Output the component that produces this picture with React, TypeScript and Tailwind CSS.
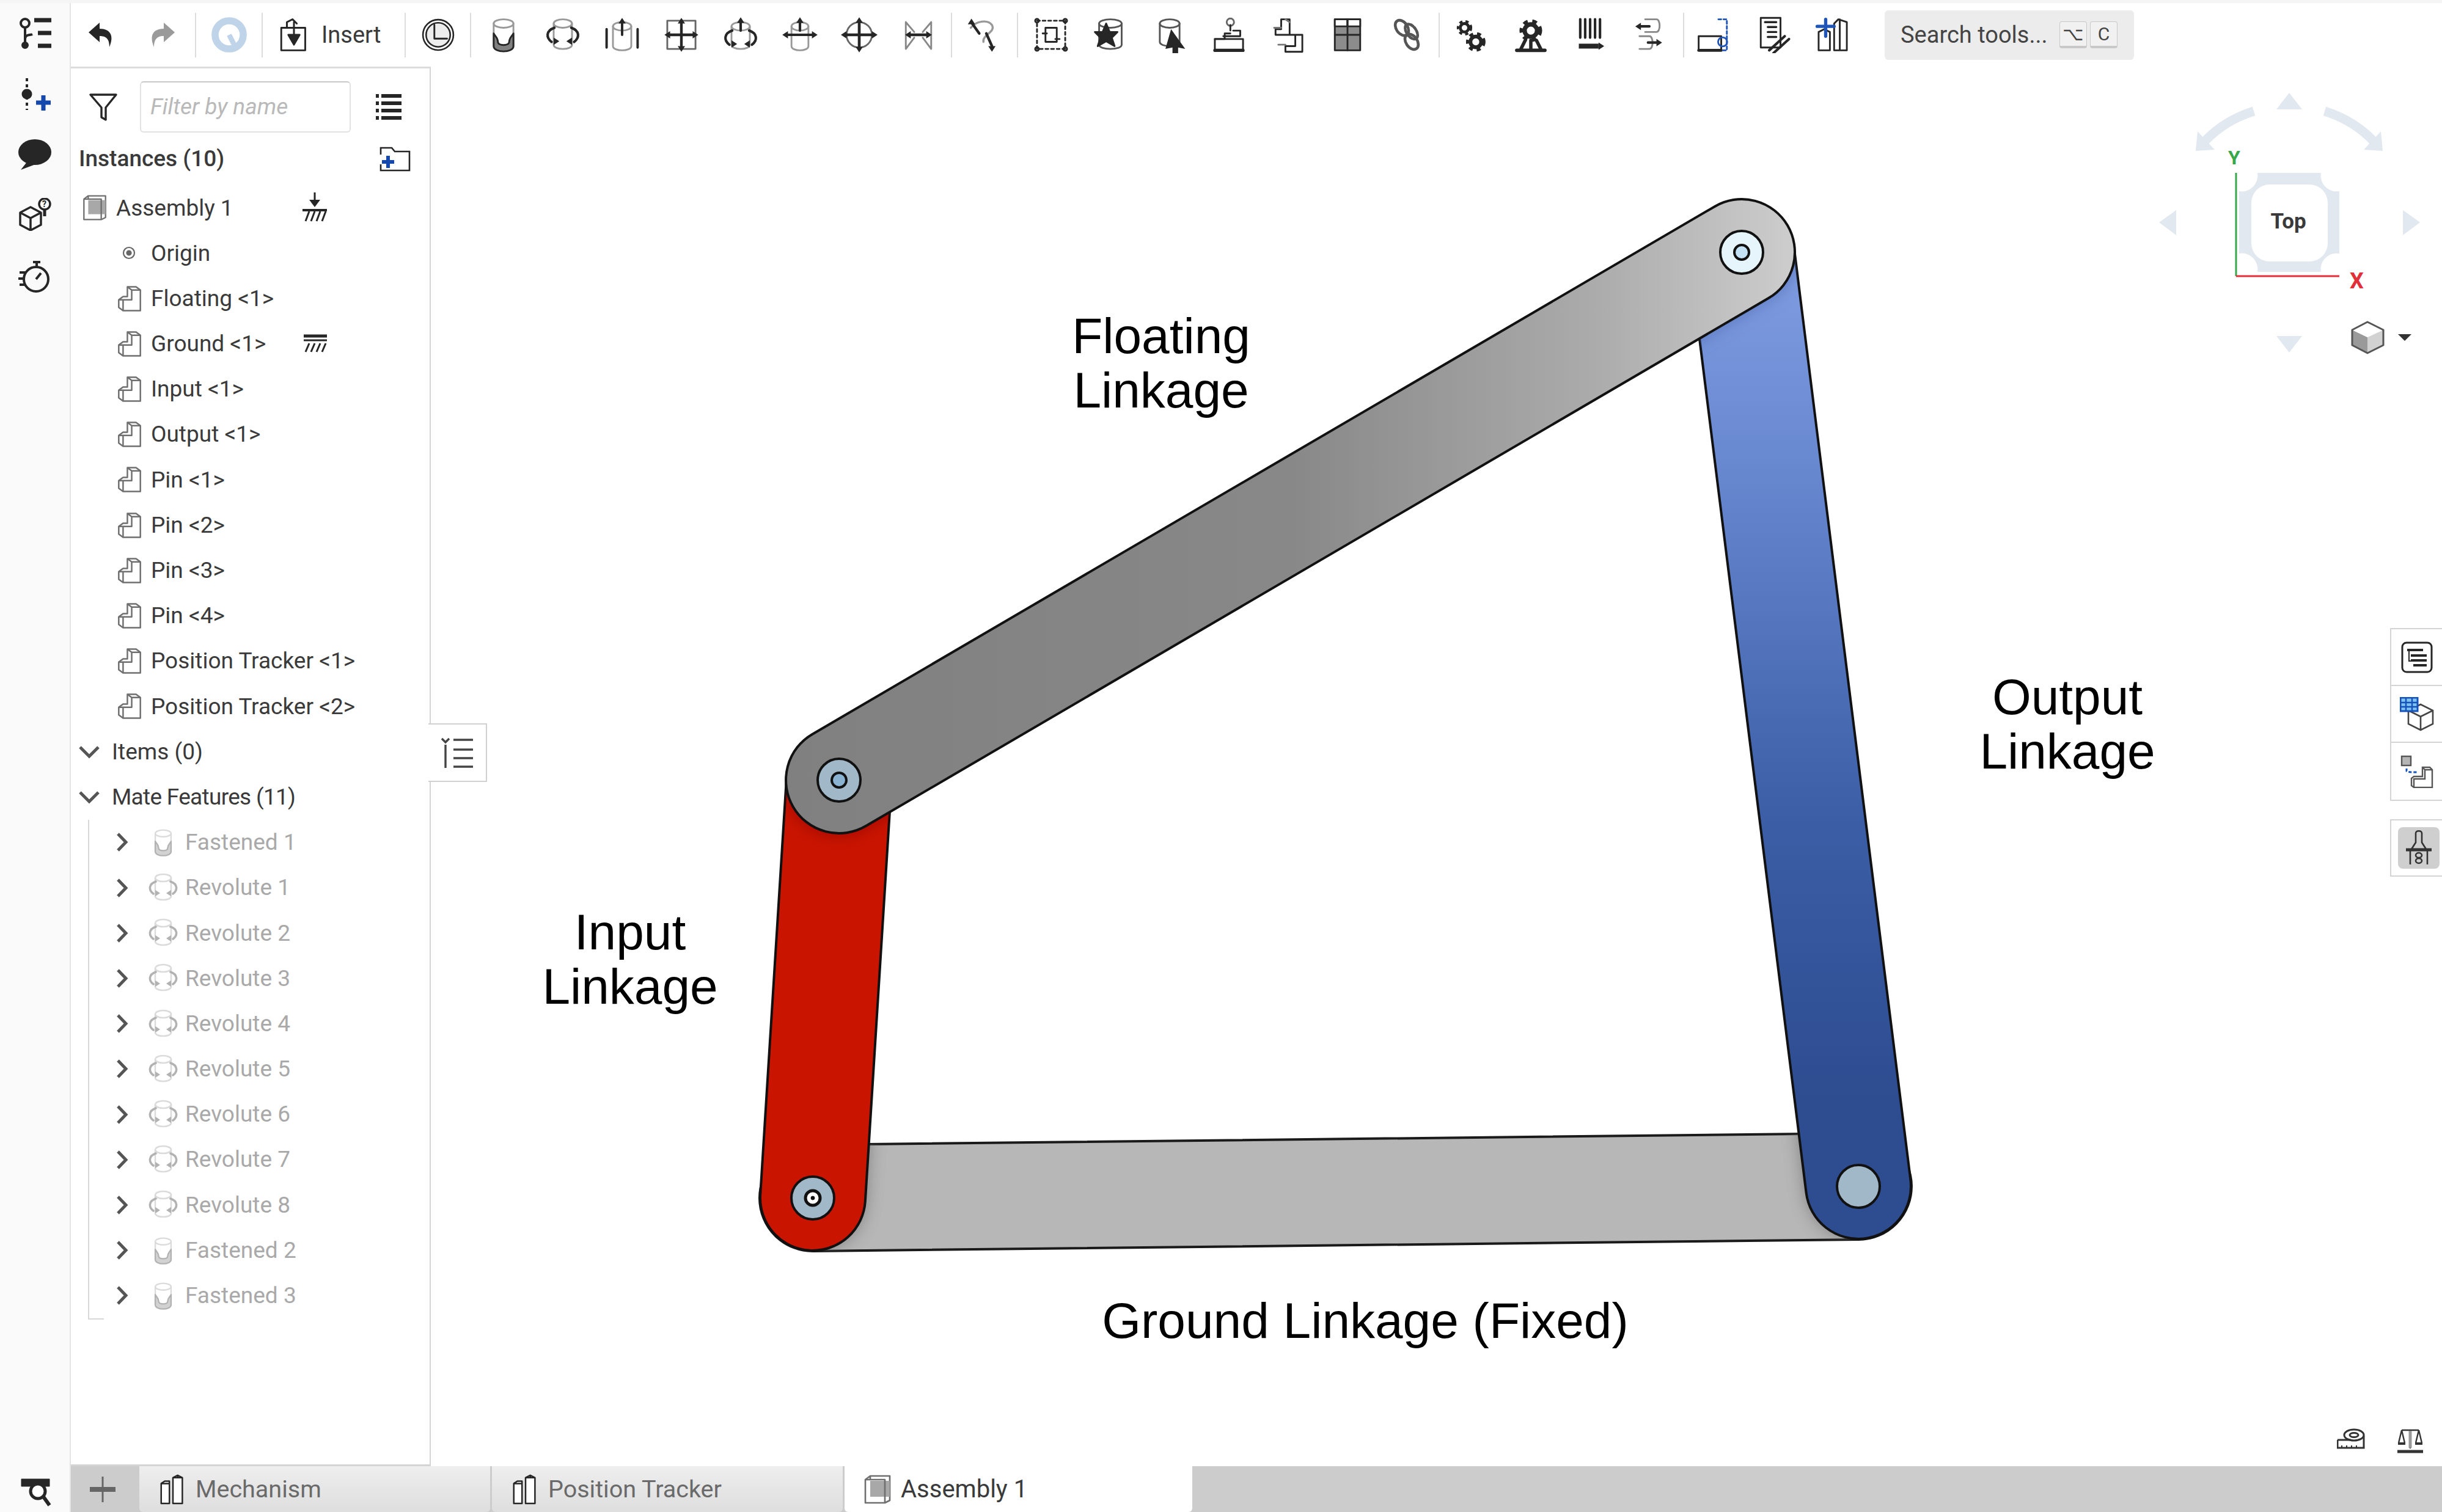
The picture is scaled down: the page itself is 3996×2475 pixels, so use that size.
import React from 'react';

const ink = '#262626';

const capsule = (x1: number, y1: number, x2: number, y2: number, r: number) => {
  const dx = x2 - x1;
  const dy = y2 - y1;
  const len = Math.hypot(dx, dy);
  const nx = (-dy / len) * r;
  const ny = (dx / len) * r;
  return `M${x1 + nx} ${y1 + ny}L${x2 + nx} ${y2 + ny}A${r} ${r} 0 0 0 ${x2 - nx} ${y2 - ny}L${x1 - nx} ${y1 - ny}A${r} ${r} 0 0 0 ${x1 + nx} ${y1 + ny}Z`;
};

const floatingPath = capsule(1371, 1277, 2848, 413, 87);
const inputPath = capsule(1328, 1961, 1371, 1277, 86);
const outputPath = capsule(3039, 1942, 2848, 413, 86);
const groundPath = capsule(1328, 1961, 3039, 1942, 87);

type IconProps = { size?: number; children: React.ReactNode; className?: string };

const Icon = ({ size = 60, children, className }: IconProps) => (
  <svg width={size} height={size} viewBox="0 0 26 26" fill="none" stroke={ink} strokeWidth="1.25" strokeLinejoin="round" strokeLinecap="round" className={className}>
    {children}
  </svg>
);

const Arrow = ({ x, y, dir }: { x: number; y: number; dir: 'u' | 'd' | 'l' | 'r' }) => {
  const pts = { u: [0, -3, -2.6, 1, 2.6, 1], d: [0, 3, -2.6, -1, 2.6, -1], l: [-3, 0, 1, -2.6, 1, 2.6], r: [3, 0, -1, -2.6, -1, 2.6] }[dir];
  return <polygon points={`${x + pts[0]},${y + pts[1]} ${x + pts[2]},${y + pts[3]} ${x + pts[4]},${y + pts[5]}`} fill={ink} stroke="none" />;
};

const Cyl = ({ x = 13, y = 5, w = 7, h = 16, c = '#999' }: { x?: number; y?: number; w?: number; h?: number; c?: string }) => (
  <g stroke={c}>
    <ellipse cx={x} cy={y} rx={w} ry={3} />
    <path d={`M${x - w} ${y}V${y + h}c0 4 ${w * 2} 4 ${w * 2} 0V${y}`} />
  </g>
);

const Gear = ({ x, y, r }: { x: number; y: number; r: number }) => (
  <g>
    <circle cx={x} cy={y} r={r} strokeWidth={r * 0.7} />
    <circle cx={x} cy={y} r={r + r * 0.55} strokeWidth={r * 0.55} strokeDasharray={`${r * 0.75} ${r * 0.75}`} strokeLinecap="butt" />
  </g>
);

const FastenedIcon = ({ size }: { size?: number }) => (
  <Icon size={size}>
    <Cyl />
    <path d="M6 12c1 2 3 3 3 6 0 3 8 3 8 0 0-3 2-4 3-6v9c0 5-14 5-14 0z" fill="#808080" stroke={ink} />
  </Icon>
);

const RevoluteIcon = ({ size }: { size?: number }) => (
  <Icon size={size}>
    <Cyl y={5} h={15} w={6.5} />
    <path d="M7 8c-6 2-6 7-2 10M19 8c6 2 6 7 2 10" strokeWidth="1.8" />
    <Arrow x={7.5} y={17.5} dir="r" />
    <Arrow x={18.5} y={17.5} dir="l" />
  </Icon>
);

const toolbarIcons: React.ReactNode[] = [
  <FastenedIcon key="fastened" />,
  <RevoluteIcon key="revolute" />,
  <Icon key="slider">
    <Cyl w={6.5} y={7} h={14} />
    <path d="M13 13V5M2 9v13M24 9v13" strokeWidth="1.7" />
    <Arrow x={13} y={4} dir="u" />
  </Icon>,
  <Icon key="planar">
    <rect x="3" y="3" width="20" height="20" stroke="#666" />
    <path d="M13 5v16M4 13h18" strokeWidth="1.9" />
    <Arrow x={13} y={4} dir="u" />
    <Arrow x={13} y={22} dir="d" />
    <Arrow x={4} y={13} dir="l" />
    <Arrow x={22} y={13} dir="r" />
  </Icon>,
  <Icon key="cylindrical">
    <Cyl w={6.5} y={7} h={13} />
    <path d="M13 10V4M7 10c-6 2-6 7-2 10M19 10c6 2 6 7 2 10" strokeWidth="1.8" />
    <Arrow x={13} y={3.5} dir="u" />
    <Arrow x={7.5} y={19.5} dir="r" />
    <Arrow x={18.5} y={19.5} dir="l" />
  </Icon>,
  <Icon key="pinslot">
    <Cyl w={6} y={7} h={14} />
    <path d="M13 10V4M4 13h18" strokeWidth="1.8" />
    <Arrow x={13} y={3.5} dir="u" />
    <Arrow x={22.5} y={13} dir="r" />
    <Arrow x={3.5} y={13} dir="l" />
  </Icon>,
  <Icon key="planar-ball">
    <circle cx="13" cy="13" r="9" stroke="#666" />
    <path d="M13 5v16M4 13h18" strokeWidth="2" />
    <Arrow x={13} y={3.5} dir="u" />
    <Arrow x={13} y={22.5} dir="d" />
    <Arrow x={3} y={13} dir="l" />
    <Arrow x={23} y={13} dir="r" />
  </Icon>,
  <Icon key="parallel">
    <path d="M4 4v19l6-8M22 4v19l-6-8M4 4l6 7M22 4l-6 7" stroke="#888" />
    <path d="M7 13h12" strokeWidth="2" />
    <Arrow x={6.5} y={13} dir="l" />
    <Arrow x={19.5} y={13} dir="r" />
  </Icon>,
  <Icon key="tangent">
    <path d="M5 8c4-5 12-6 15-2 3 5-7 7-6 12" stroke="#999" strokeWidth="1.5" />
    <path d="M6 5l5 7M16 12l4 9" strokeWidth="1.9" />
    <Arrow x={5.5} y={4.5} dir="u" />
    <Arrow x={20} y={22} dir="d" />
  </Icon>,
  <Icon key="group">
    <rect x="3" y="3" width="20" height="20" strokeDasharray="2 2" />
    <rect x="9" y="8" width="8" height="10" />
    <path d="M7 12h3M16 16h3" />
    <circle cx="3" cy="3" r="1.3" />
    <circle cx="23" cy="3" r="1.3" />
    <circle cx="3" cy="23" r="1.3" />
    <circle cx="23" cy="23" r="1.3" />
  </Icon>,
  <Icon key="replicate">
    <Cyl w={8} y={5} h={15} c="#555" />
    <polygon points="10,5 12.5,11 18,11 14,15 16,21 10,17.5 4,21 6,15 2,11 7.5,11" fill={ink} />
  </Icon>,
  <Icon key="connector">
    <Cyl w={7} y={5} h={13} c="#555" />
    <polygon points="14,9 24,23 19,22 19,26 15,26 15,22 10,23" fill={ink} stroke="none" />
  </Icon>,
  <Icon key="subassembly">
    <circle cx="14" cy="4" r="2.6" stroke="#666" />
    <path d="M14 6v4M9 14h12v-4h-5M3 16h7v-4h4" />
    <rect x="3" y="16" width="20" height="8" />
    <path d="M3 24h20" strokeWidth="2.2" />
  </Icon>,
  <Icon key="explode">
    <path d="M8 2h6v11H4v-4h4zM12 13h11v12H11v-4h7v-8" />
    <path d="M3 8h5M6 20h5M11 2l3 2" stroke="#777" />
  </Icon>,
  <Icon key="section">
    <rect x="4" y="2" width="18" height="22" fill="#8c8c8c" />
    <rect x="4" y="2" width="9" height="5" fill="#fff" />
    <rect x="13" y="2" width="9" height="5" fill="#fff" />
    <path d="M4 13h18M13 2v22" />
  </Icon>,
  <Icon key="chain">
    <g transform="rotate(55 13 13)" stroke="#555" strokeWidth="2">
      <ellipse cx="7" cy="13" rx="6" ry="4" />
      <ellipse cx="19" cy="13" rx="6" ry="4" />
      <ellipse cx="13" cy="9" rx="6" ry="3.4" strokeDasharray="2 1" />
    </g>
  </Icon>,
  <Icon key="gears">
    <Gear x={8} y={8} r={3} />
    <Gear x={16} y={18} r={3.8} />
  </Icon>,
  <Icon key="rack">
    <Gear x={13} y={10} r={4.4} />
    <path d="M6 23l3-6M20 23l-3-6M13 17v6M3 24h20" strokeWidth="2.4" />
  </Icon>,
  <Icon key="linear">
    <path d="M6 2v13M9.5 2v13M13 2v13M16.5 2v13M20 2v13" strokeWidth="1.8" />
    <path d="M5 21h14" strokeWidth="3.5" strokeLinecap="butt" />
    <Arrow x={20} y={21} dir="r" />
  </Icon>,
  <Icon key="relation">
    <path d="M10 2h8c3 0 3 9 0 9h-8" stroke="#888" />
    <path d="M6 14h7c3 0 3 9 0 9H6" stroke="#888" />
    <path d="M7 7h6M12 18.5h6" strokeWidth="1.8" />
    <Arrow x={6} y={7} dir="l" />
    <Arrow x={19} y={18.5} dir="r" />
  </Icon>,
  <Icon key="bom">
    <rect x="2" y="14" width="16" height="10" />
    <path d="M2 24h16" strokeWidth="2" />
    <path d="M16 2h6v22h-4" stroke="#1f55b8" strokeDasharray="2 1.6" />
    <circle cx="19" cy="18" r="3.2" stroke="#1f55b8" />
  </Icon>,
  <Icon key="doc">
    <path d="M4 1h14v21H4z" />
    <path d="M7 4h8M9 7.5h6M9 11h6M9 14.5h6" strokeWidth="1.5" />
    <path d="M10 24l11-10M13 26l11-10" strokeWidth="1.8" />
  </Icon>,
  <Icon key="newpart">
    <path d="M14 5l3-3 6 2v20h-9zM3 11l4-2 4 2v13H3zM18 2v22" />
    <path d="M8 2v12M2 7h12" stroke="#1f55b8" strokeWidth="2.3" />
  </Icon>,
];

const PartIcon = () => (
  <svg width="46" height="46" viewBox="0 0 26 26" fill="none" stroke="#6f6f6f" strokeWidth="1.4" strokeLinejoin="round">
    <path d="M11 2h8l4 3v19H7l-4-3v-7l4-3h4z" />
    <path d="M11 2l4 3v9H7M15 5h8M7 14v10M3 14l4 0" />
  </svg>
);

const AssemblyIcon = ({ size = 46 }: { size?: number }) => (
  <svg width={size} height={size} viewBox="0 0 26 26" fill="none" stroke="#6f6f6f" strokeWidth="1.3" strokeLinejoin="round">
    <path d="M3 5l4-3h16v20l-4 2H3z" />
    <path d="M7 6h16v13H7z" fill="#a8a8a8" stroke="none" />
    <path d="M3 5h16v19M7 2l0 3" />
  </svg>
);

const DoubleBlock = () => (
  <svg width="50" height="54" viewBox="0 0 26 28" fill="none" stroke={ink} strokeWidth="1.3" strokeLinejoin="round">
    <path d="M3 9l3-2h4v19H3zM13 4l4-2 4 2v22h-8z" fill="#fff" />
    <path d="M13 4h8M3 9h7M17 2v2" />
  </svg>
);

const Chevron = ({ down }: { down?: boolean }) =>
  down ? (
    <svg width="36" height="22" viewBox="0 0 36 22" fill="none" stroke="#555" strokeWidth="5">
      <path d="M3 3l15 15L33 3" />
    </svg>
  ) : (
    <svg width="20" height="33" viewBox="0 0 20 33" fill="none" stroke="#555" strokeWidth="5">
      <path d="M3 3l13 13.5L3 30" />
    </svg>
  );

const GroundHatch = () => (
  <svg width="42" height="50" viewBox="0 0 42 50" fill="none" stroke={ink} strokeWidth="3">
    <path d="M21 0v18" />
    <polygon points="12,12 30,12 21,24" fill={ink} stroke="none" />
    <path d="M1 29h40" strokeWidth="4" />
    <path d="M6 47l6-16M15 47l6-16M24 47l6-16M33 47l6-16" />
  </svg>
);

const Row = ({ className, children }: { className?: string; children: React.ReactNode }) => (
  <div className={`flex items-center h-[74.2px] text-[37px] text-[#3a3a3a] whitespace-nowrap ${className ?? ''}`}>{children}</div>
);

const parts = ['Floating <1>', 'Ground <1>', 'Input <1>', 'Output <1>', 'Pin <1>', 'Pin <2>', 'Pin <3>', 'Pin <4>', 'Position Tracker <1>', 'Position Tracker <2>'];
const mates = ['Fastened 1', 'Revolute 1', 'Revolute 2', 'Revolute 3', 'Revolute 4', 'Revolute 5', 'Revolute 6', 'Revolute 7', 'Revolute 8', 'Fastened 2', 'Fastened 3'];

const Sep = ({ className }: { className: string }) => <div className={`w-[2px] h-[73px] bg-[#dcdcdc] shrink-0 ${className}`} />;

const ToolButton = ({ children, className }: { children: React.ReactNode; className?: string }) => (
  <div className={`w-[97px] h-[73px] shrink-0 flex items-center justify-center ${className ?? ''}`}>{children}</div>
);

const Toolbar = () => (
  <div className="h-[104px] pl-[2px] flex items-center shrink-0 bg-white">
    <ToolButton>
      <svg width="52" height="52" viewBox="0 0 26 26" fill={ink}>
        <path d="M11 3L2 11l9 8v-5c5 0 8 2 8 9 4-9 1-15-8-15z" />
      </svg>
    </ToolButton>
    <ToolButton>
      <svg width="52" height="52" viewBox="0 0 26 26" fill="#9a9a9a">
        <path d="M15 3l9 8-9 8v-5c-5 0-8 2-8 9-4-9-1-15 8-15z" />
      </svg>
    </ToolButton>
    <Sep className="ml-[7px] mr-[5px]" />
    <ToolButton>
      <svg width="60" height="60" viewBox="0 0 26 26" fill="none" stroke="#bfd4e8">
        <circle cx="13" cy="13" r="10" strokeWidth="5" />
        <path d="M13 13l5 10" strokeWidth="3.6" />
      </svg>
    </ToolButton>
    <Sep className="ml-[5px]" />
    <div className="flex items-center pl-[21px] gap-[15px] w-[232px] shrink-0">
      <Icon>
        <path d="M4 8h17v16H4z" />
        <path d="M8 8V4l4-2 3 3M13 4v13" strokeWidth="1.3" />
        <polygon points="9,13 17,13 13,20" fill={ink} />
      </Icon>
      <span className="text-[38px] text-[#3a3a3a]">Insert</span>
    </div>
    <Sep className="" />
    <ToolButton className="ml-[4px]">
      <Icon size={54}>
        <circle cx="13" cy="13" r="12" />
        <circle cx="13" cy="13" r="9.5" fill="#ededed" />
        <path d="M10 5v11h10" strokeWidth="1.4" />
      </Icon>
    </ToolButton>
    <Sep className="ml-[4px] mr-[4px]" />
    {toolbarIcons.slice(0, 8).map((icon, i) => (
      <ToolButton key={i}>{icon}</ToolButton>
    ))}
    <Sep className="ml-[5px]" />
    <ToolButton>{toolbarIcons[8]}</ToolButton>
    <Sep className="ml-[9px] mr-[5px]" />
    {toolbarIcons.slice(9, 16).map((icon, i) => (
      <ToolButton key={i}>{icon}</ToolButton>
    ))}
    <Sep className="ml-[4px] mr-[3px]" />
    {toolbarIcons.slice(16, 20).map((icon, i) => (
      <ToolButton key={i}>{icon}</ToolButton>
    ))}
    <Sep className="ml-[7px]" />
    {toolbarIcons.slice(20, 23).map((icon, i) => (
      <ToolButton key={i}>{icon}</ToolButton>
    ))}
    <div className="ml-[37px] w-[408px] h-[81px] rounded-[6px] bg-[#ececec] flex items-center pl-[26px] gap-[10px] shrink-0">
      <span className="text-[38px] text-[#444] whitespace-nowrap w-[250px]">Search tools...</span>
      <kbd className="w-[45px] h-[44px] rounded-[4px] bg-[#f1f1f1] border border-[#c9c9c9] border-b-[4px] text-[30px] text-[#444] flex items-center justify-center font-['Roboto',sans-serif]">⌥</kbd>
      <kbd className="w-[45px] h-[44px] -ml-[5px] rounded-[4px] bg-[#f1f1f1] border border-[#c9c9c9] border-b-[4px] text-[30px] text-[#444] flex items-center justify-center font-['Roboto',sans-serif]">C</kbd>
    </div>
  </div>
);

const Rail = () => (
  <div className="w-[116px] h-full shrink-0 flex flex-col items-center bg-[#fafafa] border-r-2 border-[#e4e4e4]">
    <div className="h-[100px] flex items-center">
      <svg width="58" height="54" viewBox="0 0 58 54" fill="none" stroke={ink} strokeWidth="4">
        <circle cx="13" cy="10" r="7" />
        <path d="M13 17v28M13 36c0-8 8-6 12-8" />
        <circle cx="13" cy="46" r="4" fill={ink} />
        <path d="M28 5h28M34 26h22M34 47h22" strokeWidth="7" />
      </svg>
    </div>
    <div className="h-[100px] flex items-center">
      <svg width="54" height="54" viewBox="0 0 54 54" fill="none">
        <path d="M14 0v52" stroke={ink} strokeWidth="4" strokeDasharray="5 5" />
        <circle cx="14" cy="26" r="8.5" fill={ink} />
        <path d="M41 28v25M29 40h24" stroke="#1448ad" strokeWidth="7" />
      </svg>
    </div>
    <div className="h-[96px] flex items-center">
      <svg width="56" height="50" viewBox="0 0 56 50" fill={ink}>
        <ellipse cx="28" cy="21" rx="27" ry="21" />
        <path d="M16 36L5 50l24-9z" />
      </svg>
    </div>
    <div className="h-[100px] flex items-center">
      <svg width="56" height="54" viewBox="0 0 56 54" fill="none" stroke={ink} strokeWidth="3.5" strokeLinejoin="round">
        <path d="M4 24l17-9 17 9v20l-17 9-17-9zM4 24l17 9 17-9M21 33v20" />
        <path d="M44 30V16" strokeWidth="5" />
        <circle cx="44" cy="10" r="9" fill="#fff" />
        <text x="40" y="15" fontSize="14" fontWeight="700" fill={ink} stroke="none" fontFamily="Roboto">?</text>
      </svg>
    </div>
    <div className="h-[104px] flex items-center">
      <svg width="54" height="54" viewBox="0 0 54 54" fill="none" stroke={ink} strokeWidth="4">
        <circle cx="29" cy="31" r="20" />
        <path d="M24 3h12M30 3v8M29 31l8-10M2 20h10M0 30h8M2 40h8" />
      </svg>
    </div>
    <div className="mt-auto mb-[8px] ml-[6px]">
      <svg width="54" height="50" viewBox="0 0 54 50" fill="none" stroke={ink}>
        <path d="M2 4h46v12H2z" fill={ink} />
        <circle cx="29" cy="24" r="12" strokeWidth="5" fill="#fff" />
        <path d="M38 33l10 14" strokeWidth="6" />
      </svg>
    </div>
  </div>
);

const Panel = () => (
  <div className="relative z-10 w-[589px] h-full shrink-0 bg-white border-t-[3px] border-r-2 border-b-[3px] border-[#d4d4d4] border-t-[#dcdcdc]">
    <div className="h-[111px] flex items-center pl-[30px] pt-[15px]">
      <svg width="46" height="46" viewBox="0 0 46 46" fill="none" stroke={ink} strokeWidth="3.4" strokeLinejoin="round" className="shrink-0">
        <path d="M2 3h42L27 24v20l-7-4V24z" />
      </svg>
      <div className="ml-[37px] w-[345px] h-[84px] rounded-[6px] border-2 border-[#e2e2e2] border-t-[#c8c8c8] flex items-center pl-[15px] italic text-[37px] text-[#b9b9b9] shrink-0">Filter by name</div>
      <svg width="42" height="42" viewBox="0 0 42 42" fill={ink} className="ml-[41px] shrink-0">
        <path d="M0 0h5v6H0zM9 0h33v6H9zM0 12h5v6H0zM9 12h33v6H9zM0 24h5v6H0zM9 24h33v6H9zM0 36h5v6H0zM9 36h33v6H9z" />
      </svg>
    </div>
    <Row className="pl-[13px] font-medium">
      <span className="w-[491px]">Instances (10)</span>
      <svg width="52" height="42" viewBox="0 0 52 42" fill="none" stroke={ink} strokeWidth="2.6">
        <path d="M3 14V3h18l5 6h24v31H3V30" />
        <path d="M15 16v20M5 26h20" stroke="#1448ad" strokeWidth="6" />
      </svg>
    </Row>
    <Row className="pl-[16px] mt-[6px]">
      <AssemblyIcon />
      <span className="ml-[12px] w-[304px]">Assembly 1</span>
      <GroundHatch />
    </Row>
    <Row className="pl-[74px]">
      <span className="w-[42px] flex justify-center">
        <svg width="22" height="22" viewBox="0 0 22 22" fill="none" stroke="#666" strokeWidth="2.2">
          <circle cx="11" cy="11" r="9" />
          <circle cx="11" cy="11" r="3.5" fill="#666" />
        </svg>
      </span>
      <span className="ml-[15px]">Origin</span>
    </Row>
    {parts.map((name) => (
      <Row key={name} className="pl-[73px]">
        <PartIcon />
        <span className="ml-[12px] w-[246px]">{name}</span>
        {name === 'Ground <1>' && (
          <svg width="38" height="32" viewBox="0 0 38 32" fill="none" stroke={ink} strokeWidth="3" className="ml-[4px]">
            <path d="M0 3h38" strokeWidth="5" />
            <path d="M0 10h38" strokeWidth="3" />
            <path d="M3 29l6-14M12 29l6-14M21 29l6-14M30 29l6-14" />
          </svg>
        )}
      </Row>
    ))}
    <Row className="pl-[12px]">
      <Chevron down />
      <span className="ml-[19px]">Items (0)</span>
    </Row>
    <Row className="pl-[12px]">
      <Chevron down />
      <span className="ml-[19px] tracking-[-0.7px]">Mate Features (11)</span>
    </Row>
    <div className="relative ml-[28px] border-l-2 border-[#d8d8d8]">
      {mates.map((name) => (
        <Row key={name} className="pl-[44px] text-[#a9a9a9]">
          <Chevron />
          <span className="ml-[31px] w-[52px] flex justify-center opacity-35">{name.startsWith('Fastened') ? <FastenedIcon size={48} /> : <RevoluteIcon size={52} />}</span>
          <span className="ml-[10px]">{name}</span>
        </Row>
      ))}
      <div className="w-[24px] h-[2px] bg-[#d8d8d8]" />
    </div>
    <div className="absolute top-[1072px] right-[-94px] w-[96px] h-[96px] bg-white border-2 border-l-0 border-[#d0d0d0] flex items-center justify-center">
      <svg width="52" height="50" viewBox="0 0 52 50" fill="none" stroke="#444" strokeWidth="3.4">
        <path d="M1 2l6 6 6-6M7 12v38M20 4h32M20 20h32M20 34h32M20 48h32" />
      </svg>
    </div>
  </div>
);

const ViewCube = () => (
  <g>
    <g fill="#e1e8ef">
      <polygon points="3744,152 3723,179 3765,179" />
      <polygon points="3744,577 3723,550 3765,550" />
      <polygon points="3531,364 3559,344 3559,385" />
      <polygon points="3958,364 3930,344 3930,385" />
      <polygon points="3591,247 3594,215 3622,245" />
      <polygon points="3897,247 3894,215 3866,245" />
    </g>
    <path d="M3686 182C3654 192 3628 208 3606 231M3802 182C3834 192 3860 208 3882 231" fill="none" stroke="#e1e8ef" strokeWidth="15" />
    <path fillRule="evenodd" fill="#e1e8ef" d="M3692 283H3796A26 26 0 0 0 3826 313V415A26 26 0 0 0 3796 445H3692A26 26 0 0 0 3662 415V313A26 26 0 0 0 3692 283ZM3712 302A30 30 0 0 0 3682 332V398A30 30 0 0 0 3712 428H3777A30 30 0 0 0 3807 398V332A30 30 0 0 0 3777 302Z" />
    <path d="M3657 283V452" stroke="#36a84a" strokeWidth="3" />
    <path d="M3657 452H3826" stroke="#e0303a" strokeWidth="3" />
    <path d="M3847 540L3872 552V578L3847 565Z" fill="#9a9a9a" />
    <path d="M3898 540L3872 552V578L3898 565Z" fill="#d2d2d2" />
    <path d="M3847 540L3872 527 3898 540 3872 552Z" fill="#fff" />
    <path d="M3847 540L3872 527 3898 540V565L3872 578 3847 565Z" fill="none" stroke="#555" strokeWidth="3" strokeLinejoin="round" />
    <polygon points="3922,547 3944,547 3933,558" fill="#333" />
  </g>
);

const labelText = "absolute text-center text-[82px] leading-[89px] text-black font-['Liberation_Sans',Arial,sans-serif]";

const Viewport = () => (
  <div className="relative flex-1 h-full overflow-hidden bg-white">
    <svg className="absolute inset-0" width="3293" height="2291" viewBox="703 109 3293 2291">
      <defs>
        <linearGradient id="floating" gradientUnits="userSpaceOnUse" x1="1285" y1="0" x2="2936" y2="0">
          <stop offset="0" stopColor="#808080" />
          <stop offset="0.5" stopColor="#888888" />
          <stop offset="0.8" stopColor="#ababab" />
          <stop offset="1" stopColor="#cdcdcd" />
        </linearGradient>
        <linearGradient id="output" gradientUnits="userSpaceOnUse" x1="0" y1="480" x2="0" y2="1800">
          <stop offset="0" stopColor="#7c99de" />
          <stop offset="0.3" stopColor="#5f80c9" />
          <stop offset="0.65" stopColor="#3b5ea6" />
          <stop offset="1" stopColor="#2e4c90" />
        </linearGradient>
        <clipPath id="clip-ground">
          <path d={groundPath} />
        </clipPath>
        <clipPath id="clip-input">
          <path d={inputPath} />
        </clipPath>
        <clipPath id="clip-output">
          <path d={outputPath} />
        </clipPath>
        <filter id="soft" x="-20%" y="-20%" width="140%" height="140%">
          <feGaussianBlur stdDeviation="14" />
        </filter>
      </defs>

      <path d={groundPath} fill="#b7b7b7" stroke="#1a1a1a" strokeWidth="4" />
      <g clipPath="url(#clip-ground)">
        <path d={inputPath} fill="#6e6e6e" filter="url(#soft)" opacity="0.8" />
        <path d={outputPath} fill="#6e6e6e" filter="url(#soft)" opacity="0.8" />
      </g>
      <path d={inputPath} fill="#c91500" stroke="#111" strokeWidth="4" />
      <g clipPath="url(#clip-input)">
        <path d={floatingPath} fill="#8c0c00" filter="url(#soft)" opacity="0.8" />
      </g>
      <path d={outputPath} fill="url(#output)" stroke="#111" strokeWidth="4" />
      <g clipPath="url(#clip-output)">
        <path d={floatingPath} fill="#4a65a8" filter="url(#soft)" opacity="0.7" />
      </g>
      <path d={floatingPath} fill="url(#floating)" stroke="#111" strokeWidth="4" />

      <g stroke="#111" strokeWidth="4">
        <circle cx="1371" cy="1277" r="35" fill="#a1b8c8" />
        <circle cx="1371" cy="1277" r="12" fill="#8ab3d2" />
        <circle cx="2848" cy="413" r="35" fill="#e6f5fc" />
        <circle cx="2848" cy="413" r="12" fill="#c3e2f6" />
        <circle cx="1328" cy="1961" r="35" fill="#a1b8c8" />
        <circle cx="1328" cy="1961" r="12" fill="#fff" strokeWidth="5" />
        <circle cx="1328" cy="1961" r="3" fill="#111" strokeWidth="1" />
        <circle cx="3039" cy="1942" r="35" fill="#a1b8c8" />
      </g>
      <ViewCube />
    </svg>

    <div className={`${labelText} left-[995px] top-[396px] w-[400px]`}>Floating<br />Linkage</div>
    <div className={`${labelText} left-[126px] top-[1372px] w-[400px]`}>Input<br />Linkage</div>
    <div className={`${labelText} left-[2478px] top-[987px] w-[400px]`}>Output<br />Linkage</div>
    <div className={`${labelText} left-[1029px] top-[2008px] w-[1000px]`}>Ground Linkage (Fixed)</div>

    <div className="absolute left-[2962px] top-[228px] font-bold text-[35px] text-[#3a3a3a] w-[155px] text-center">Top</div>
    <div className="absolute left-[2941px] top-[125px] font-bold text-[32px] text-[#36a84a]">Y</div>
    <div className="absolute left-[3140px] top-[324px] font-bold text-[36px] text-[#e0303a]">X</div>

    <div className="absolute right-0 top-[919px] w-[85px] bg-white border-2 border-r-0 border-[#d4d4d4] flex flex-col">
      <div className="h-[93px] flex items-center justify-center border-b-2 border-[#d4d4d4]">
        <svg width="52" height="52" viewBox="0 0 52 52" fill="none" stroke={ink} strokeWidth="3">
          <rect x="2" y="2" width="48" height="48" rx="7" />
          <path d="M10 14h26M16 23h26M16 31h26M20 39h22" strokeWidth="4" />
          <path d="M13 14v18h4" strokeWidth="2" />
        </svg>
      </div>
      <div className="h-[93px] flex items-center justify-center border-b-2 border-[#d4d4d4]">
        <svg width="56" height="56" viewBox="0 0 56 56" fill="none" stroke="#444" strokeWidth="2.6">
          <path d="M14 22l20-10 20 10v22L34 54 14 44zM14 22l20 10 20-10M34 32v22" />
          <rect x="1" y="1" width="28" height="22" fill="#7fc3ee" stroke="#1652bb" strokeWidth="3" />
          <path d="M10 1v22M20 1v22M1 9h28M1 16h28" stroke="#1652bb" strokeWidth="2.5" />
        </svg>
      </div>
      <div className="h-[93px] flex items-center justify-center">
        <svg width="54" height="54" viewBox="0 0 54 54" fill="none" stroke="#555" strokeWidth="2.4">
          <rect x="2" y="2" width="15" height="15" fill="#b5b5b5" />
          <path d="M10 22v4c0 2 10 2 18 2" stroke="#1652bb" strokeWidth="3" strokeDasharray="5 3" />
          <path d="M36 20h12l4 4v29H22l-4-3v-12l4-3h14z" />
          <path d="M36 20l4 4v15H22M52 24H40M22 38v15" />
        </svg>
      </div>
    </div>
    <div className="absolute right-0 top-[1232px] w-[85px] h-[94px] bg-white border-2 border-r-0 border-[#d4d4d4] flex items-center justify-end pr-[4px]">
      <div className="w-[68px] h-[68px] rounded-[8px] bg-[#cfcfcf] flex items-center justify-center">
        <svg width="44" height="58" viewBox="0 0 44 58" fill="none" stroke="#333" strokeWidth="2.6">
          <path d="M17 20V5c0-5 10-5 10 0v15l7 11H10z" />
          <path d="M1 32h42" strokeWidth="5" />
          <path d="M8 34v22M36 34v22" />
          <ellipse cx="22" cy="41" rx="5" ry="4" />
          <ellipse cx="22" cy="50" rx="5" ry="4" />
        </svg>
      </div>
    </div>

    <div className="absolute left-[3119px] top-[2229px]">
      <svg width="46" height="38" viewBox="0 0 46 38" fill="none" stroke="#333" strokeWidth="3">
        <ellipse cx="28" cy="11" rx="16" ry="9" />
        <ellipse cx="28" cy="11" rx="7" ry="3.5" />
        <path d="M1 19h22M44 12v20H1V19" />
        <path d="M8 28v3M16 28v3M24 28v3M32 28v3" strokeWidth="2" />
      </svg>
    </div>
    <div className="absolute left-[3218px] top-[2229px]">
      <svg width="42" height="42" viewBox="0 0 42 42" fill="none" stroke="#333" strokeWidth="2.4">
        <path d="M7 3h28M21 3v30" />
        <path d="M21 4v28" stroke="#999" strokeWidth="5" />
        <path d="M7 3L2 24M7 3l5 21M35 3l-5 21M35 3l5 21" />
        <path d="M1 25h12M29 25h12" strokeWidth="4" />
        <path d="M0 38h42" strokeWidth="5" />
      </svg>
    </div>
  </div>
);

const tabs = [
  { name: 'Mechanism', icon: <DoubleBlock />, active: false },
  { name: 'Position Tracker', icon: <DoubleBlock />, active: false },
  { name: 'Assembly 1', icon: <AssemblyIcon size={52} />, active: true },
];

const TabBar = () => (
  <div className="h-[75px] shrink-0 flex bg-[#cccccc]">
    <div className="w-[112px] pr-[8px] flex items-center justify-center shrink-0">
      <svg width="44" height="44" viewBox="0 0 44 44" fill="none" stroke="#666">
        <path d="M22 1v42" strokeWidth="3" />
        <path d="M1 22h42" strokeWidth="8" />
      </svg>
    </div>
    {tabs.map((tab) => (
      <div
        key={tab.name}
        className={
          tab.active
            ? 'w-[569px] mr-[3px] rounded-b-[6px] bg-white flex items-center pl-[28px] gap-[12px] text-[40px] text-[#3a3a3a]'
            : 'w-[574px] mr-[3px] rounded-b-[6px] bg-gradient-to-b from-[#eeeeee] to-[#dedede] flex items-center pl-[30px] gap-[12px] text-[39.5px] text-[#6a6a6a]'
        }
      >
        {tab.icon}
        <span>{tab.name}</span>
      </div>
    ))}
  </div>
);

export default function App() {
  return (
    <div className="w-[3996px] h-[2475px] flex flex-col overflow-hidden bg-white font-['Roboto',sans-serif]">
      <div className="h-[5px] shrink-0 bg-[#f5f5f5]" />
      <div className="flex-1 min-h-0 flex">
        <Rail />
        <div className="flex-1 min-w-0 flex flex-col">
          <Toolbar />
          <div className="flex-1 min-h-0 flex">
            <Panel />
            <Viewport />
          </div>
          <TabBar />
        </div>
      </div>
    </div>
  );
}
